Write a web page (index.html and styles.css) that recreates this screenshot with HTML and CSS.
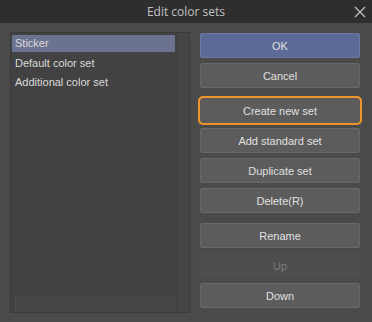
FILE: index.html
```html
<!DOCTYPE html>
<html lang="en">
<head>
  <meta charset="UTF-8">
  <title>Edit color sets</title>
  <link rel="stylesheet" href="styles.css">
</head>
<body>
  <div class="dialog">
    <div class="titlebar">
      <span></span>
      <span class="title">Edit color sets</span>
      <svg class="close" width="12" height="12" viewBox="0 0 12 12">
        <path d="M1 1 L11 11 M11 1 L1 11" stroke="#c0c0c0" stroke-width="1.2" fill="none"/>
      </svg>
    </div>

    <div class="content">
      <div class="list-panel">
        <div class="list-main">
          <ul class="list">
            <li class="selected">Sticker</li>
            <li>Default color set</li>
            <li>Additional color set</li>
          </ul>
          <div class="vscroll"></div>
        </div>
        <div class="hscroll">
          <div class="hscroll-track"></div>
          <div class="corner"></div>
        </div>
      </div>

      <div class="buttons">
        <div class="group">
          <button class="btn primary">OK</button>
          <button class="btn">Cancel</button>
        </div>
        <div class="group">
          <button class="btn focused">Create new set</button>
          <button class="btn">Add standard set</button>
          <button class="btn">Duplicate set</button>
          <button class="btn">Delete(R)</button>
        </div>
        <div class="group">
          <button class="btn">Rename</button>
          <button class="btn" disabled>Up</button>
          <button class="btn">Down</button>
        </div>
      </div>
    </div>
  </div>
</body>
</html>
```

FILE: styles.css
```css
body {
  margin: 0;
  background-color: #4a4a4a;
  font-family: "Liberation Sans", Arial, sans-serif;
  font-size: 11px;
  color: #dadada;
}

.dialog {
  width: 372px;
  height: 322px;
  background-color: #4a4a4a;
}

.titlebar {
  height: 23px;
  background-color: #2e2e2e;
  display: grid;
  grid-template-columns: 1fr auto 1fr;
  align-items: center;
}

.title {
  font-family: "Open Sans", "Liberation Sans", sans-serif;
  font-size: 12px;
  color: #c2c2c2;
}

.close {
  justify-self: end;
  margin-right: 6px;
}

.content {
  display: flex;
  gap: 10px;
  padding: 9px 12px 0 10px;
}

.list-panel {
  width: 178px;
  height: 279px;
  border: 1px solid #3a3a3a;
  background-color: #424242;
  display: flex;
  flex-direction: column;
}

.list-main {
  flex: 1;
  display: flex;
}

.list {
  flex: 1;
  list-style: none;
  margin: 0;
  padding: 2px 1px 0 1px;
}

.list li {
  height: 19px;
  line-height: 18px;
  padding-left: 3px;
  margin-right: 1px;
}

.list li.selected {
  height: 17px;
  line-height: 17px;
  margin-bottom: 2px;
  background-color: #6b7391;
  border-radius: 1px;
}

.vscroll {
  width: 11px;
  border-left: 1px solid #3c3c3c;
  background-color: #454545;
}

.hscroll {
  height: 15px;
  display: flex;
  border-top: 1px solid #474747;
}

.hscroll-track {
  flex: 1;
  margin-left: 4px;
  border-left: 1px solid #4c4c4c;
  background-color: #444444;
}

.corner {
  width: 11px;
  border-left: 1px solid #3c3c3c;
  background-color: #454545;
}

.buttons {
  width: 160px;
  margin-top: 1px;
  display: flex;
  flex-direction: column;
  gap: 10px;
}

.group {
  display: flex;
  flex-direction: column;
  gap: 5px;
}

.btn {
  height: 25px;
  padding: 0;
  font-family: inherit;
  font-size: 11px;
  color: #e0e0e0;
  background-color: #5c5c5c;
  border: 1px solid #686868;
  border-radius: 2px;
}

.btn.primary {
  background-color: #5b6a96;
  border-color: #6c79a2;
}

.btn.focused {
  box-shadow: 0 0 0 2px #f0932b;
  border-color: #5c5c5c;
  border-radius: 3px;
}

.btn:disabled {
  background-color: #4d4d4d;
  border-color: #4d4d4d;
  color: #7c7c7c;
}
```
